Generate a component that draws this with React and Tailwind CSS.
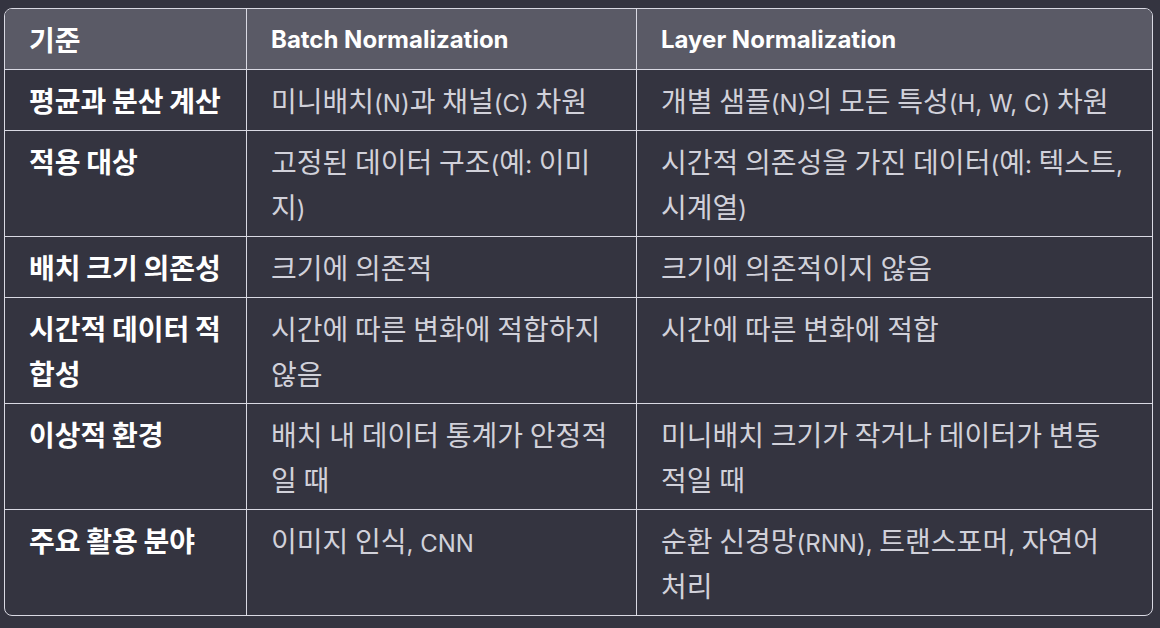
const headers = ['기준', 'Batch Normalization', 'Layer Normalization']

// each cell is a list of lines, broken where the reference wraps
const rows = [
  [['평균과 분산 계산'], ['미니배치(N)과 채널(C) 차원'], ['개별 샘플(N)의 모든 특성(H, W, C) 차원']],
  [['적용 대상'], ['고정된 데이터 구조(예: 이미', '지)'], ['시간적 의존성을 가진 데이터(예: 텍스트,', '시계열)']],
  [['배치 크기 의존성'], ['크기에 의존적'], ['크기에 의존적이지 않음']],
  [['시간적 데이터 적', '합성'], ['시간에 따른 변화에 적합하지', '않음'], ['시간에 따른 변화에 적합']],
  [['이상적 환경'], ['배치 내 데이터 통계가 안정적', '일 때'], ['미니배치 크기가 작거나 데이터가 변동', '적일 때']],
  [['주요 활용 분야'], ['이미지 인식, CNN'], ['순환 신경망(RNN), 트랜스포머, 자연어', '처리']],
]

// hangul is drawn a little larger than latin, as in the reference
function Line({ text }) {
  const parts = text.split(/([\uAC00-\uD7A3]+)/).filter(Boolean)
  return (
    <div className="h-[45px] whitespace-nowrap leading-[45px]">
      {parts.map((p, i) =>
        /[\uAC00-\uD7A3]/.test(p) ? (
          <span key={i} className="text-[28px]" style={{ fontFamily: '"Noto Sans CJK KR", sans-serif' }}>
            {p}
          </span>
        ) : (
          <span key={i}>{p}</span>
        )
      )}
    </div>
  )
}

export default function App() {
  return (
    <div
      className="min-h-[628px] w-[1160px] bg-[#343440] pl-1 pt-2"
      style={{ fontFamily: 'Inter, "Noto Sans CJK KR", sans-serif' }}
    >
      <div className="w-[1149px] overflow-hidden rounded-lg border border-[#d9d9e3]">
        <table className="w-full table-fixed border-separate border-spacing-0 text-[24px]">
          <colgroup>
            <col className="w-[242px]" />
            <col className="w-[390px]" />
            <col />
          </colgroup>
          <thead>
            <tr className="bg-[#5a5a66]">
              {headers.map((h, i) => (
                <th
                  key={h}
                  className={`border-b border-[#d9d9e3] pb-[7px] pl-6 pr-4 pt-2 text-left align-top font-bold text-white ${
                    i < 2 ? 'border-r' : ''
                  }`}
                >
                  <Line text={h} />
                </th>
              ))}
            </tr>
          </thead>
          <tbody>
            {rows.map((row, r) => (
              <tr key={r}>
                {row.map((lines, i) => (
                  <td
                    key={i}
                    className={`border-[#d9d9e3] pb-[7px] pl-6 pr-4 pt-2 align-top ${
                      i === 0 ? 'font-bold text-white' : 'text-[#d1d1da]'
                    } ${i < 2 ? 'border-r' : ''} ${r < rows.length - 1 ? 'border-b' : ''}`}
                  >
                    {lines.map((l) => (
                      <Line key={l} text={l} />
                    ))}
                  </td>
                ))}
              </tr>
            ))}
          </tbody>
        </table>
      </div>
    </div>
  )
}
